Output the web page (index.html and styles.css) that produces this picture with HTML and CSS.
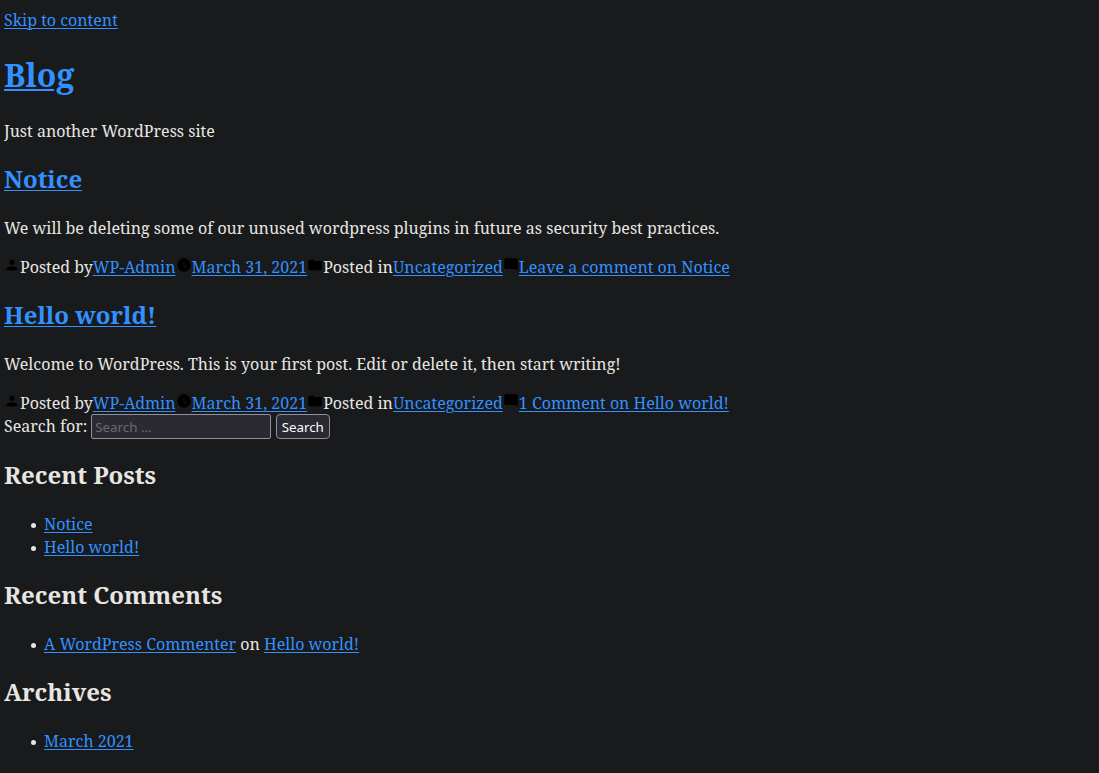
FILE: index.html
```html
<!DOCTYPE html>
<html lang="en">
<head>
<meta charset="utf-8">
<title>Blog</title>
<link rel="stylesheet" href="styles.css">
</head>
<body>
<a class="skip" href="#content">Skip to content</a>
<header>
<h1 class="site-title"><a href="#">Blog</a></h1>
<p class="text">Just another WordPress site</p>
</header>
<main id="content">
<article>
<h2 class="heading"><a href="#">Notice</a></h2>
<p class="text">We will be deleting some of our unused wordpress plugins in future as security best practices.</p>
<footer class="meta"><svg class="icon" viewBox="0 0 24 24"><path d="M12 12c2.21 0 4-1.79 4-4s-1.79-4-4-4-4 1.79-4 4 1.79 4 4 4zm0 2c-2.67 0-8 1.34-8 4v2h16v-2c0-2.66-5.33-4-8-4z"/></svg><span>Posted by</span><a href="#">WP-Admin</a><svg class="icon" viewBox="0 0 24 24"><path fill-rule="evenodd" d="M12 2a10 10 0 1 0 0 20 10 10 0 0 0 0-20zm4.2 14.2L11 13V7h1.5v5.2l4.5 2.7z"/></svg><a href="#">March 31, 2021</a><svg class="icon" viewBox="0 0 24 24"><path d="M10 4H4c-1.1 0-2 .9-2 2v12c0 1.1.9 2 2 2h16c1.1 0 2-.9 2-2V8c0-1.1-.9-2-2-2h-8l-2-2z"/></svg><span>Posted in</span><a href="#">Uncategorized</a><svg class="icon" viewBox="0 0 24 24"><path d="M21.99 4c0-1.1-.89-2-1.99-2H4c-1.1 0-2 .9-2 2v12c0 1.1.9 2 2 2h14l4 4-.01-18z"/></svg><a href="#">Leave a comment on Notice</a></footer>
</article>
<article>
<h2 class="heading"><a href="#">Hello world!</a></h2>
<p class="text">Welcome to WordPress. This is your first post. Edit or delete it, then start writing!</p>
<footer class="meta"><svg class="icon" viewBox="0 0 24 24"><path d="M12 12c2.21 0 4-1.79 4-4s-1.79-4-4-4-4 1.79-4 4 1.79 4 4 4zm0 2c-2.67 0-8 1.34-8 4v2h16v-2c0-2.66-5.33-4-8-4z"/></svg><span>Posted by</span><a href="#">WP-Admin</a><svg class="icon" viewBox="0 0 24 24"><path fill-rule="evenodd" d="M12 2a10 10 0 1 0 0 20 10 10 0 0 0 0-20zm4.2 14.2L11 13V7h1.5v5.2l4.5 2.7z"/></svg><a href="#">March 31, 2021</a><svg class="icon" viewBox="0 0 24 24"><path d="M10 4H4c-1.1 0-2 .9-2 2v12c0 1.1.9 2 2 2h16c1.1 0 2-.9 2-2V8c0-1.1-.9-2-2-2h-8l-2-2z"/></svg><span>Posted in</span><a href="#">Uncategorized</a><svg class="icon" viewBox="0 0 24 24"><path d="M21.99 4c0-1.1-.89-2-1.99-2H4c-1.1 0-2 .9-2 2v12c0 1.1.9 2 2 2h14l4 4-.01-18z"/></svg><a href="#">1 Comment on Hello world!</a></footer>
</article>
</main>
<aside>
<form class="search"><label for="s">Search for:</label><input class="field" id="s" type="text" placeholder="Search …"><button class="submit" type="button">Search</button></form>
<h2 class="heading">Recent Posts</h2>
<ul class="list"><li><a href="#">Notice</a></li><li><a href="#">Hello world!</a></li></ul>
<h2 class="heading">Recent Comments</h2>
<ul class="list"><li><a href="#">A WordPress Commenter</a> on <a href="#">Hello world!</a></li></ul>
<h2 class="heading">Archives</h2>
<ul class="list"><li><a href="#">March 2021</a></li></ul>
</aside>
</body>
</html>
```
FILE: styles.css
```css
body {
  margin: 9px 4px 0;
  background: #181a1b;
  color: #e8e6e3;
  font: 16px/23px "Noto Serif", serif;
}
a {
  color: #3391ff;
  text-decoration-thickness: 1px;
  text-underline-offset: 2px;
}
.site-title {
  margin: 19.5px 0 23.5px;
  font-size: 32px;
  line-height: 45px;
}
.site-title a {
  text-decoration-thickness: 2px;
}
.heading {
  margin: 19px 0 21px;
  font-size: 24px;
  line-height: 34px;
}
.text {
  margin: 16px 0;
}
.meta {
  display: flex;
}
.icon {
  width: 16px;
  height: 16px;
  margin-top: 1px;
  fill: #000;
}
.search {
  display: flex;
  height: 24px;
}
.field,
.submit {
  box-sizing: border-box;
  height: 25px;
  margin: -1px 0 0;
  border: 1px solid #8f8f9d;
  background: #2b2a33;
  color: #fbfbfe;
  font: 13.333px/18px "Noto Sans", sans-serif;
}
.field {
  width: 180px;
  margin-left: 4px;
  padding: 1px 3px;
  border-radius: 2px;
}
.field::placeholder {
  color: #6c6a6d;
}
.submit {
  width: 54px;
  margin-left: 5px;
  padding: 0 1px 0 0;
  border-radius: 4px;
}
.list {
  margin: 0;
  padding-left: 40px;
  list-style: none;
}
.list li::before {
  content: "";
  display: inline-block;
  width: 5.5px;
  height: 5.5px;
  margin: 0 8px 0 -13.5px;
  border-radius: 50%;
  background: #e8e6e3;
  vertical-align: 2px;
}
```
